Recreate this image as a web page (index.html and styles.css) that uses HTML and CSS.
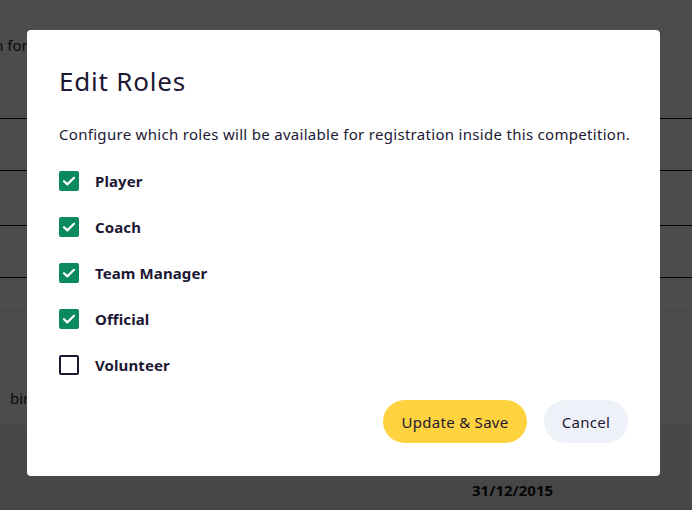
FILE: index.html
```html
<!DOCTYPE html>
<html lang="en">
  <head>
    <meta charset="UTF-8" />
    <meta name="viewport" content="width=device-width, initial-scale=1.0" />
    <title>Edit Roles</title>
    <link rel="stylesheet" href="styles.css">
  </head>
  <body>
    <div class="page">
      <div class="page-top">
        <p class="page-text top-text">Registration form</p>
      </div>
      <div class="page-rows">
        <div class="page-row r1"></div>
        <div class="page-row r2"></div>
        <div class="page-row r3"></div>
        <div class="page-row r4"></div>
        <div class="page-row light">
          <p class="page-text birth-text">birth date</p>
        </div>
      </div>
      <div class="page-foot">
        <span class="page-date">31/12/2015</span>
      </div>
    </div>

    <div class="overlay">
      <div class="modal">
        <h2 class="modal-title">Edit Roles</h2>
        <p class="modal-intro">Configure which roles will be available for registration inside this competition.</p>

        <ul class="roles">
          <li class="role"><span class="box checked"><svg viewBox="0 0 20 20"><path d="M5 10.2l3.3 3.2L15 6.8" /></svg></span>Player</li>
          <li class="role"><span class="box checked"><svg viewBox="0 0 20 20"><path d="M5 10.2l3.3 3.2L15 6.8" /></svg></span>Coach</li>
          <li class="role"><span class="box checked"><svg viewBox="0 0 20 20"><path d="M5 10.2l3.3 3.2L15 6.8" /></svg></span>Team Manager</li>
          <li class="role"><span class="box checked"><svg viewBox="0 0 20 20"><path d="M5 10.2l3.3 3.2L15 6.8" /></svg></span>Official</li>
          <li class="role"><span class="box"></span>Volunteer</li>
        </ul>

        <div class="actions">
          <button class="btn btn-primary">Update &amp; Save</button>
          <button class="btn btn-secondary">Cancel</button>
        </div>
      </div>
    </div>
  </body>
</html>
```

FILE: styles.css
```css
body {
  margin: 0;
  font-family: "Noto Sans", sans-serif;
  color: #1c1834;
  background: #fff;
  height: 510px;
  overflow: hidden;
}

/* page behind the dialog */
.page {
  height: 510px;
  display: flex;
  flex-direction: column;
}
.page-text {
  margin: 0;
  font-size: 15px;
  line-height: 20px;
  color: #2a2a2a;
  white-space: nowrap;
}
.page-top {
  height: 118px;
  padding-top: 35px;
  box-sizing: border-box;
  overflow: hidden;
}
.top-text {
  margin-left: -82px;
}
.page-row {
  border-top: 1px solid #000;
  box-sizing: border-box;
}
.r1 { height: 52px; }
.r2 { height: 55px; }
.r3 { height: 52px; }
.r4 { height: 33px; }
.page-row.light {
  border-top-color: #e3e3e3;
  height: 115px;
  padding: 77px 0 0 10px;
}
.page-foot {
  flex: 1;
  background: #ededed;
  padding: 55px 0 0 472px;
  box-sizing: border-box;
  font-weight: 700;
  font-size: 15px;
  line-height: 20px;
  color: #111;
}

/* overlay + dialog */
.overlay {
  position: fixed;
  inset: 0;
  background: rgba(0, 0, 0, 0.7);
  padding: 30px 0 0 27px;
}
.modal {
  width: 633px;
  height: 446px;
  box-sizing: border-box;
  background: #fff;
  border-radius: 4px;
  padding: 34px 32px 0 32px;
}
.modal-title {
  margin: 0;
  font-size: 26px;
  font-weight: 400;
  line-height: 34px;
  letter-spacing: 0.8px;
}
.modal-intro {
  margin: 26px -8px 0 0;
  font-size: 15px;
  line-height: 20px;
  letter-spacing: 0.3px;
  white-space: nowrap;
}
.roles {
  list-style: none;
  margin: 14px 0 0;
  padding: 0;
}
.role {
  display: flex;
  align-items: center;
  height: 46px;
  font-size: 15px;
  font-weight: 700;
  letter-spacing: 0.1px;
}
.box {
  width: 20px;
  height: 20px;
  box-sizing: border-box;
  border: 2px solid #1c1834;
  border-radius: 2px;
  margin-right: 16px;
  display: flex;
}
.box.checked {
  background: #0a8a5e;
  border-color: #0a8a5e;
  border-width: 0;
}
.box svg {
  width: 20px;
  height: 20px;
  fill: none;
  stroke: #fff;
  stroke-width: 2.2;
  stroke-linecap: round;
  stroke-linejoin: round;
}
.actions {
  display: flex;
  justify-content: flex-end;
  gap: 17px;
  margin-top: 12px;
}
.btn {
  font-family: inherit;
  font-size: 15px;
  color: #1c1834;
  border: 0;
  height: 43px;
  border-radius: 22px;
  padding: 0;
  letter-spacing: 0.3px;
  cursor: pointer;
}
.btn-primary {
  background: #ffd23f;
  width: 144px;
}
.btn-secondary {
  background: #eef1f7;
  width: 84px;
}
```
